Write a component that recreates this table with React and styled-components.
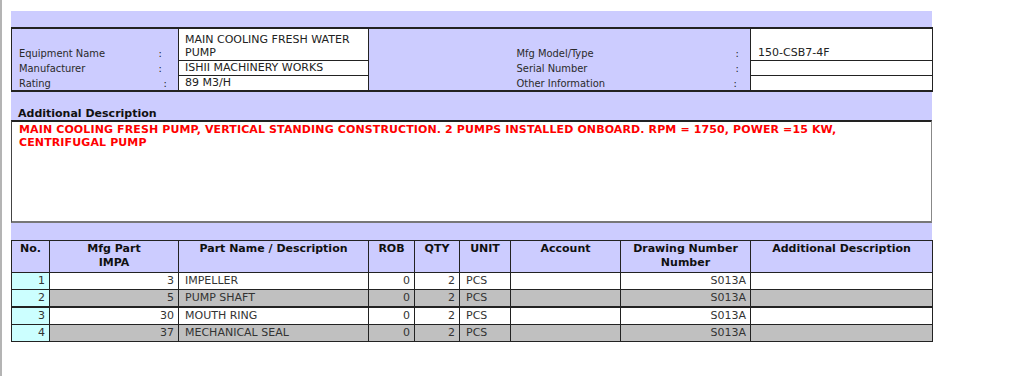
import React from 'react';
import styled, { createGlobalStyle } from 'styled-components';

const GlobalStyle = createGlobalStyle`
  html, body {
    margin: 0;
    padding: 0;
    background: #ffffff;
  }
  body {
    font-family: "DejaVu Sans", Verdana, sans-serif;
    font-size: 11px;
    color: #222;
  }
`;

const Frame = styled.div`
  min-height: 376px;
  box-sizing: border-box;
  border-left: 2px solid #b4b4b4;
  padding: 11px 0 0 9px;
`;

const Panel = styled.div`
  width: 921px;
  background: #ccccff;
`;

const Band = styled.div`
  height: ${(p) => p.h}px;
`;

const InfoTable = styled.table`
  width: 921px;
  table-layout: fixed;
  border-collapse: collapse;
  border-top: 2px solid #222;
  border-bottom: 2px solid #222;
  border-left: 1px solid #222;
`;

const Label = styled.td`
  font-family: "DejaVu Sans Condensed", "DejaVu Sans", sans-serif;
  padding: 0 0 0 ${(p) => p.pl || 7}px;
  vertical-align: bottom;
  line-height: 13px;
  height: ${(p) => p.h}px;
  white-space: nowrap;
  color: #2a2a2a;
`;

const Colon = styled.td`
  font-family: "DejaVu Sans Condensed", "DejaVu Sans", sans-serif;
  padding: 0 0 0 ${(p) => p.pl || 3}px;
  vertical-align: bottom;
  line-height: 13px;
  border-right: ${(p) => (p.edge ? '1px solid #222' : 'none')};
`;

const Value = styled.td`
  background: #ffffff;
  border: 1px solid #222;
  padding: 0 0 1px ${(p) => p.pl || 6}px;
  vertical-align: bottom;
  line-height: 13px;
  color: #222;
`;

const DescHeading = styled.div`
  height: 28px;
  display: flex;
  align-items: flex-end;
  padding-left: 7px;
  font-weight: bold;
  color: #111;
  line-height: 13px;
`;

const DescBox = styled.div`
  height: 98px;
  background: #ffffff;
  border-top: 2px solid #222;
  border-bottom: 2px solid #777;
  border-left: 1px solid #444;
  border-right: 1px solid #888;
  padding: 1px 7px 0;
  color: #ff0000;
  font-weight: bold;
  line-height: 13px;
  letter-spacing: 0.12px;
`;

const PartsTable = styled.table`
  width: 921px;
  table-layout: fixed;
  border-collapse: collapse;
  border: 1px solid #222;
`;

const Th = styled.th`
  border: 1px solid #222;
  height: 30px;
  padding: 1px 2px 0;
  vertical-align: top;
  text-align: center;
  font-weight: bold;
  line-height: 14px;
  color: #111;
  white-space: nowrap;
`;

const Row = styled.tr`
  background: ${(p) => (p.alt ? '#c0c0c0' : '#ffffff')};
  border-bottom: ${(p) => (p.thick ? '2px' : '1px')} solid #222;
`;

const Td = styled.td`
  border-left: 1px solid #222;
  border-right: 1px solid #222;
  height: 16px;
  padding: 0 ${(p) => (p.align === 'right' ? 4 : 6)}px;
  text-align: ${(p) => p.align || 'left'};
  line-height: 14px;
  white-space: nowrap;
  color: #333;
`;

const NoCell = styled(Td)`
  background: #ccffff;
`;

const partCols = [38, 129, 190, 46, 45, 51, 110, 130, 182];

const parts = [
  { no: 1, impa: 3, name: 'IMPELLER' },
  { no: 2, impa: 5, name: 'PUMP SHAFT' },
  { no: 3, impa: 30, name: 'MOUTH RING' },
  { no: 4, impa: 37, name: 'MECHANICAL SEAL' },
];

export default function App() {
  return (
    <>
      <GlobalStyle />
      <Frame>
        <Panel>
          <Band h={16} />
          <InfoTable>
            <colgroup>
              <col style={{ width: 144 }} />
              <col style={{ width: 23 }} />
              <col style={{ width: 190 }} />
              <col style={{ width: 142 }} />
              <col style={{ width: 220 }} />
              <col style={{ width: 20 }} />
              <col style={{ width: 182 }} />
            </colgroup>
            <tbody>
              <tr>
                <Label h={31}>Equipment Name</Label>
                <Colon>:</Colon>
                <Value>MAIN COOLING FRESH WATER PUMP</Value>
                <Label />
                <Label pl={6}>Mfg Model/Type</Label>
                <Colon pl={5} edge>:</Colon>
                <Value pl={7}>150-CSB7-4F</Value>
              </tr>
              <tr>
                <Label h={15}>Manufacturer</Label>
                <Colon>:</Colon>
                <Value>ISHII MACHINERY WORKS</Value>
                <Label />
                <Label pl={6}>Serial Number</Label>
                <Colon pl={5} edge>:</Colon>
                <Value />
              </tr>
              <tr>
                <Label h={15}>Rating</Label>
                <Colon pl={8}>:</Colon>
                <Value>89 M3/H</Value>
                <Label />
                <Label pl={6}>Other Information</Label>
                <Colon pl={3} edge>:</Colon>
                <Value />
              </tr>
            </tbody>
          </InfoTable>
          <DescHeading>Additional Description</DescHeading>
          <DescBox>
            MAIN COOLING FRESH PUMP, VERTICAL STANDING CONSTRUCTION. 2 PUMPS INSTALLED ONBOARD. RPM = 1750, POWER =15 KW, CENTRIFUGAL PUMP
          </DescBox>
          <Band h={17} />
          <PartsTable>
            <colgroup>
              {partCols.map((w, i) => (
                <col key={i} style={{ width: w }} />
              ))}
            </colgroup>
            <thead>
              <tr>
                <Th>No.</Th>
                <Th>Mfg Part<br />IMPA</Th>
                <Th>Part Name / Description</Th>
                <Th>ROB</Th>
                <Th>QTY</Th>
                <Th>UNIT</Th>
                <Th>Account</Th>
                <Th>Drawing Number<br />Number</Th>
                <Th>Additional Description</Th>
              </tr>
            </thead>
            <tbody>
              {parts.map((p, i) => (
                <Row key={p.no} alt={i % 2 === 1} thick={i === 1}>
                  <NoCell align="right">{p.no}</NoCell>
                  <Td align="right">{p.impa}</Td>
                  <Td>{p.name}</Td>
                  <Td align="right">0</Td>
                  <Td align="right">2</Td>
                  <Td>PCS</Td>
                  <Td />
                  <Td align="right">S013A</Td>
                  <Td />
                </Row>
              ))}
            </tbody>
          </PartsTable>
        </Panel>
      </Frame>
    </>
  );
}
